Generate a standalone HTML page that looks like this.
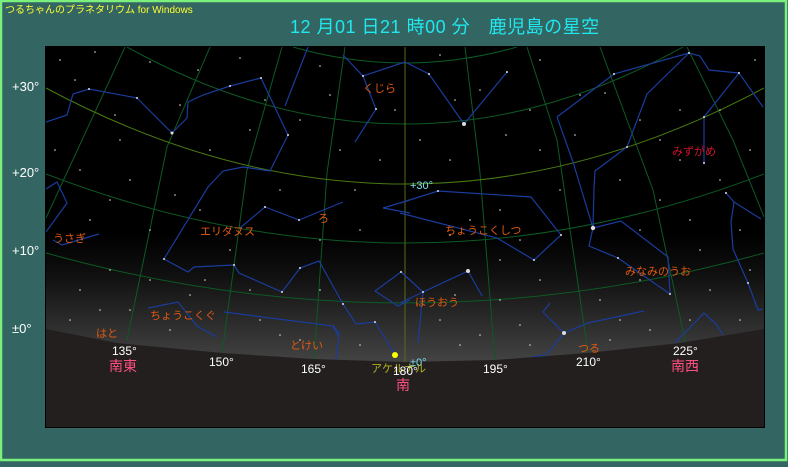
<!DOCTYPE html>
<html><head><meta charset="utf-8"><style>
html,body{margin:0;padding:0;background:#336662;}
body{width:788px;height:462px;overflow:hidden;}
svg text{font-family:"Liberation Sans","Noto Sans CJK JP",sans-serif;}
</style></head><body>
<svg width="788" height="462" viewBox="0 0 788 462" xmlns="http://www.w3.org/2000/svg">
<defs>
<linearGradient id="glow" x1="0" y1="0" x2="0" y2="1">
<stop offset="0" stop-color="#000"/>
<stop offset="0.3" stop-color="#101010"/>
<stop offset="1" stop-color="#484848"/>
</linearGradient>
<clipPath id="sky"><rect x="46" y="47" width="718" height="380"/></clipPath>
</defs>
<rect x="0" y="0" width="788" height="462" fill="#336662"/>
<rect x="1" y="1" width="785" height="459" fill="none" stroke="#7cf07c" stroke-width="2.5"/>
<text x="5" y="13" font-size="10" fill="#ffff30">つるちゃんのプラネタリウム for Windows</text>
<text x="290" y="33" font-size="18" letter-spacing="0.5" fill="#20e8f0">12 月01 日21 時00 分　鹿児島の星空</text>
<g fill="#fff" font-size="13">
<text x="12" y="91">+30°</text>
<text x="12" y="177">+20°</text>
<text x="12" y="255">+10°</text>
<text x="12" y="333">±0°</text>
</g>
<rect x="45" y="46" width="720" height="382" fill="#000"/>
<g clip-path="url(#sky)">
<rect x="46" y="235" width="718" height="135" fill="url(#glow)"/>
<g fill="none" stroke="#0d5a25" stroke-width="1">
<path d="M127 47 Q405 201 683 47"/>
<path d="M293 47 Q405 79 517 47"/>
<path d="M46 174 Q405 312 764 174"/>
<path d="M46 253 Q405 353 764 253"/>
<path d="M125 47 L46 218"/>
<path d="M210 47 L167 147 L127 340"/>
<path d="M282 47 L247 170 L222 353"/>
<path d="M345 47 L327 173 L314 360"/>
<path d="M465 47 L480 173 L495 360"/>
<path d="M527 47 L557 140 L588 353"/>
<path d="M600 47 L653 190 L686 345"/>
<path d="M687 47 L733 140 L764 217"/>
</g>
<path d="M46 88 Q405 280 764 88" fill="none" stroke="#4a7a10" stroke-width="1"/>
<path d="M405 47 L405 362" stroke="#5a6a18" stroke-width="1"/>
<g fill="none" stroke="#1a3c9c" stroke-width="1.2">
<polyline points="46,122 67,115 73,94 89,89 137,98 172,133 187,118 188,102 203,95 230,86 261,78 288,135 270,171 243,167 223,171 208,187 164,259 188,272 194,267 234,265 239,273 282,292 300,268 319,261 343,304 356,324 375,322 392,350 395,354"/>
<polyline points="333,325 339,334 336,360"/>
<polyline points="240,228 265,207 299,220 343,202"/>
<polyline points="285,106 308,47"/>
<polyline points="343,55 363,76 405,62"/>
<polyline points="363,76 376,109 355,142"/>
<polyline points="46,189 57,182 67,203 46,232"/>
<polyline points="53,240 62,245 99,234"/>
<polyline points="148,308 178,302 197,326 217,337"/>
<polyline points="224,312 333,326 339,337"/>
<polyline points="410,280 401,272 375,291 398,306 410,300"/>
<polyline points="410,200 383,208 410,213"/>
<polyline points="405,62 429,74 464,124 507,72"/>
<polyline points="400,203 438,191 531,197 561,235 534,260 497,238 400,213"/>
<polyline points="557,117 614,74 689,53 700,56 709,70 739,73 704,117 704,163"/>
<polyline points="739,73 763,107"/>
<polyline points="689,53 647,94 627,147 595,171 594,188 593,228 589,246 618,258 670,294"/>
<polyline points="593,228 621,221 668,257 670,294"/>
<polyline points="557,117 573,162 593,228"/>
<polyline points="726,193 734,202 731,222 733,249 748,283 758,310 763,309"/>
<polyline points="734,202 761,219"/>
<polyline points="400,271 423,292 468,271 482,296"/>
<polyline points="423,292 400,303"/>
<polyline points="423,292 418,343"/>
<polyline points="550,303 543,312 564,333 588,323 644,311"/>
<polyline points="564,333 546,355 532,357"/>
<polyline points="675,343 704,313 717,325 723,335"/>
</g>
<g fill="#ddd">
<circle cx="464" cy="124" r="2"/><circle cx="593" cy="228" r="2.2"/><circle cx="468" cy="271" r="2"/><circle cx="564" cy="333" r="2"/><circle cx="172" cy="133" r="1.5"/>
<circle cx="89" cy="89" r="1"/><circle cx="137" cy="98" r="1"/><circle cx="230" cy="86" r="1"/><circle cx="261" cy="78" r="1"/><circle cx="288" cy="135" r="1"/><circle cx="363" cy="76" r="1"/><circle cx="376" cy="109" r="1"/><circle cx="429" cy="74" r="1"/><circle cx="507" cy="72" r="1"/><circle cx="614" cy="74" r="1"/><circle cx="689" cy="53" r="1"/><circle cx="739" cy="73" r="1"/><circle cx="704" cy="117" r="1"/><circle cx="704" cy="163" r="1"/><circle cx="627" cy="147" r="1"/><circle cx="438" cy="191" r="1"/><circle cx="561" cy="235" r="1"/><circle cx="534" cy="260" r="1"/><circle cx="265" cy="207" r="1"/><circle cx="299" cy="220" r="1"/><circle cx="164" cy="259" r="1"/><circle cx="234" cy="265" r="1"/><circle cx="282" cy="292" r="1"/><circle cx="300" cy="268" r="1"/><circle cx="343" cy="304" r="1"/><circle cx="375" cy="322" r="1"/><circle cx="401" cy="272" r="1"/><circle cx="423" cy="292" r="1"/><circle cx="618" cy="258" r="1"/><circle cx="670" cy="294" r="1"/><circle cx="726" cy="193" r="1"/><circle cx="748" cy="283" r="1"/>
<circle cx="60" cy="60" r="0.8"/><circle cx="95" cy="52" r="0.8"/><circle cx="150" cy="62" r="0.8"/><circle cx="198" cy="70" r="0.8"/><circle cx="240" cy="58" r="0.8"/><circle cx="320" cy="66" r="0.8"/><circle cx="440" cy="55" r="0.8"/><circle cx="480" cy="90" r="0.8"/><circle cx="540" cy="60" r="0.8"/><circle cx="580" cy="95" r="0.8"/><circle cx="605" cy="93" r="0.8"/><circle cx="640" cy="120" r="0.8"/><circle cx="680" cy="110" r="0.8"/><circle cx="750" cy="150" r="0.8"/><circle cx="720" cy="180" r="0.8"/><circle cx="660" cy="200" r="0.8"/><circle cx="620" cy="180" r="0.8"/><circle cx="540" cy="150" r="0.8"/><circle cx="506" cy="135" r="0.8"/><circle cx="450" cy="160" r="0.8"/><circle cx="420" cy="140" r="0.8"/><circle cx="380" cy="160" r="0.8"/><circle cx="340" cy="150" r="0.8"/><circle cx="300" cy="120" r="0.8"/><circle cx="250" cy="130" r="0.8"/><circle cx="210" cy="150" r="0.8"/><circle cx="120" cy="140" r="0.8"/><circle cx="80" cy="170" r="0.8"/><circle cx="55" cy="150" r="0.8"/><circle cx="110" cy="200" r="0.8"/><circle cx="150" cy="230" r="0.8"/><circle cx="200" cy="210" r="0.8"/><circle cx="230" cy="250" r="0.8"/><circle cx="320" cy="240" r="0.8"/><circle cx="360" cy="230" r="0.8"/><circle cx="450" cy="235" r="0.8"/><circle cx="500" cy="260" r="0.8"/><circle cx="540" cy="280" r="0.8"/><circle cx="600" cy="300" r="0.8"/><circle cx="640" cy="280" r="0.8"/><circle cx="700" cy="250" r="0.8"/><circle cx="740" cy="230" r="0.8"/><circle cx="80" cy="290" r="0.8"/><circle cx="110" cy="270" r="0.8"/><circle cx="130" cy="310" r="0.8"/><circle cx="190" cy="295" r="0.8"/><circle cx="260" cy="320" r="0.8"/><circle cx="300" cy="340" r="0.8"/><circle cx="360" cy="345" r="0.8"/><circle cx="440" cy="320" r="0.8"/><circle cx="460" cy="345" r="0.8"/><circle cx="520" cy="325" r="0.8"/><circle cx="610" cy="340" r="0.8"/><circle cx="650" cy="330" r="0.8"/><circle cx="740" cy="320" r="0.8"/><circle cx="70" cy="320" r="0.8"/><circle cx="100" cy="310" r="0.8"/><circle cx="560" cy="190" r="0.8"/><circle cx="680" cy="160" r="0.8"/><circle cx="500" cy="210" r="0.8"/>
<circle cx="75" cy="80" r="0.8"/><circle cx="115" cy="115" r="0.8"/><circle cx="180" cy="105" r="0.8"/><circle cx="265" cy="100" r="0.8"/><circle cx="330" cy="95" r="0.8"/><circle cx="395" cy="110" r="0.8"/><circle cx="455" cy="100" r="0.8"/><circle cx="530" cy="110" r="0.8"/><circle cx="575" cy="135" r="0.8"/><circle cx="660" cy="140" r="0.8"/><circle cx="720" cy="110" r="0.8"/><circle cx="755" cy="60" r="0.8"/><circle cx="90" cy="220" r="0.8"/><circle cx="130" cy="180" r="0.8"/><circle cx="175" cy="195" r="0.8"/><circle cx="280" cy="190" r="0.8"/><circle cx="355" cy="190" r="0.8"/><circle cx="470" cy="220" r="0.8"/><circle cx="520" cy="240" r="0.8"/><circle cx="640" cy="230" r="0.8"/><circle cx="690" cy="220" r="0.8"/><circle cx="750" cy="270" r="0.8"/><circle cx="710" cy="290" r="0.8"/><circle cx="150" cy="280" r="0.8"/><circle cx="205" cy="280" r="0.8"/><circle cx="250" cy="290" r="0.8"/><circle cx="320" cy="290" r="0.8"/><circle cx="455" cy="295" r="0.8"/><circle cx="500" cy="300" r="0.8"/><circle cx="620" cy="320" r="0.8"/><circle cx="690" cy="320" r="0.8"/><circle cx="170" cy="330" r="0.8"/><circle cx="280" cy="335" r="0.8"/><circle cx="480" cy="335" r="0.8"/><circle cx="530" cy="345" r="0.8"/>
</g>
<polygon points="46,329 117,343 222,353 313,359 405,362 495,360 587,353 680,343 764,329 764,428 46,428" fill="#231f1f"/>
</g>
<circle cx="395" cy="355" r="3" fill="#ffff00"/>
<g fill="#e05a10" font-size="11">
<text x="363" y="92">くじら</text>
<text x="200" y="235">エリダヌス</text>
<text x="318" y="222">ろ</text>
<text x="53" y="242">うさぎ</text>
<text x="150" y="319">ちょうこくぐ</text>
<text x="96" y="337">はと</text>
<text x="290" y="349">とけい</text>
<text x="445" y="234">ちょうこくしつ</text>
<text x="415" y="306">ほうおう</text>
<text x="625" y="275">みなみのうお</text>
<text x="578" y="352">つる</text>
</g>
<text x="672" y="155" font-size="11" fill="#d01030">みずがめ</text>
<text x="410" y="189" font-size="11" fill="#7ee0f0">+30°</text>
<text x="410" y="366" font-size="11" fill="#7ee0f0">±0°</text>
<text x="371" y="372" font-size="11" fill="#b0b020">アケルナル</text>
<g fill="#fff" font-size="12">
<text x="112" y="355">135°</text>
<text x="209" y="366">150°</text>
<text x="301" y="373">165°</text>
<text x="393" y="375">180°</text>
<text x="483" y="373">195°</text>
<text x="576" y="366">210°</text>
<text x="673" y="355">225°</text>
</g>
<g fill="#ff4f80" font-size="14">
<text x="109" y="371">南東</text>
<text x="396" y="390">南</text>
<text x="671" y="371">南西</text>
</g>
</svg>
</body></html>
